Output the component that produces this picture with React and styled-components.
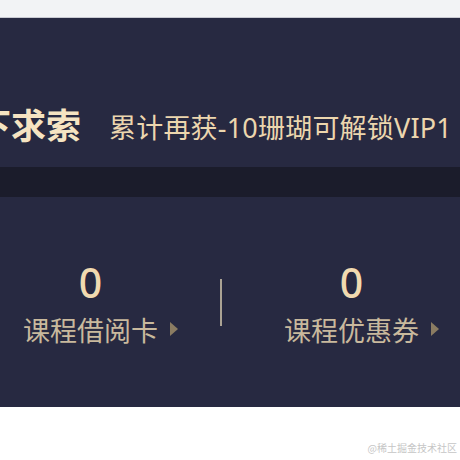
import React from 'react';
import styled, { createGlobalStyle } from 'styled-components';

const GlobalStyle = createGlobalStyle`
    html, body {
        margin:0;
        padding:0;
        background:#ffffff;
    }
    body {
        font-family:"Noto Sans CJK SC", "Noto Sans", sans-serif;
        width:460px;
        height:460px;
        overflow:hidden;
    }
`

const TopBar = styled.div`
    height:17px;
    background-color:#f2f3f5;
    border-bottom:1px solid #c9cad2;
`
const Panel = styled.div`
    background-color:#272941;
`
const Header = styled.div`
    height:149px;
    display:flex;
    align-items:flex-end;
    padding-bottom:26px;
    box-sizing:border-box;
    white-space:nowrap;
    overflow:hidden;
`
const Title = styled.h1`
    margin:0 0 0 -59px;
    font-size:35px;
    font-weight:700;
    line-height:1;
    color:#f6e4c2;
`
const Tip = styled.span`
    margin-left:28px;
    font-family:"Noto Sans", "Noto Sans CJK SC", sans-serif;
    font-size:27px;
    letter-spacing:0.2px;
    line-height:1;
    color:#ecd6ae;
`
const Band = styled.div`
    height:30px;
    background-color:#1b1c2b;
`
const Stats = styled.div`
    height:210px;
    display:flex;
    align-items:center;
    box-sizing:border-box;
`
const Stat = styled.div`
    display:flex;
    flex-direction:column;
    align-items:center;
    margin-left:${p => p.offset}px;
`
const Count = styled.div`
    font-family:"Noto Sans", sans-serif;
    font-size:41px;
    font-weight:500;
    line-height:1;
    color:#f1dab0;
`
const Label = styled.div`
    position:relative;
    margin-top:13px;
    font-size:27px;
    line-height:1;
    color:#c9b99d;
`
const Arrow = styled.span`
    position:absolute;
    right:-20px;
    top:6px;
    width:0;
    height:0;
    border-top:7px solid transparent;
    border-bottom:7px solid transparent;
    border-left:8px solid #8b7c62;
`
const Divider = styled.div`
    width:2px;
    height:47px;
    margin-left:${p => p.offset}px;
    background-color:#aba394;
`
const Mark = styled.div`
    text-align:right;
    padding:33px 3px 0 0;
    font-size:10px;
    color:#c6c6c6;
`

const StatItem = ({ count, label, offset }) => (
    <Stat offset={offset}>
        <Count>{count}</Count>
        <Label>
            {label}
            <Arrow />
        </Label>
    </Stat>
);

export default function App(){
    return(
        <>
            <GlobalStyle />
            <TopBar />
            <Panel>
                <Header>
                    <Title>上下求索</Title>
                    <Tip>累计再获-10珊瑚可解锁VIP1</Tip>
                </Header>
                <Band />
                <Stats>
                    <StatItem count="0" label="课程借阅卡" offset={23} />
                    <Divider offset={62} />
                    <StatItem count="0" label="课程优惠券" offset={62} />
                </Stats>
            </Panel>
            <Mark>@稀土掘金技术社区</Mark>
        </>
    );
}
